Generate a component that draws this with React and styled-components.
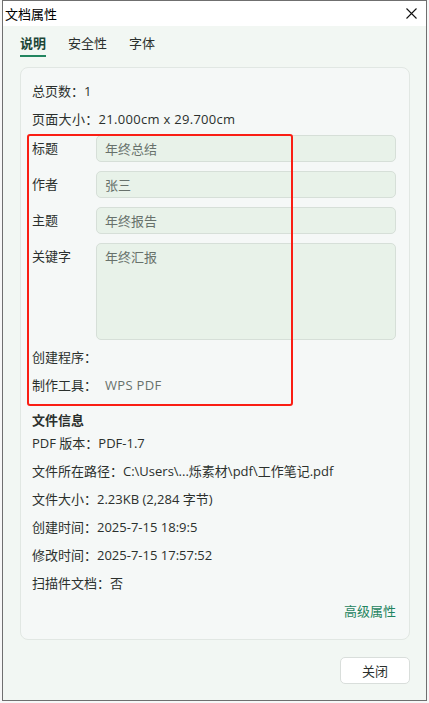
import React from "react";
import styled, {createGlobalStyle} from "styled-components";

const GlobalStyle = createGlobalStyle`
  html, body {
    margin: 0;
    padding: 0;
    background: #f7f7f7;
  }
  body {
    font-family: "Open Sans", "Noto Sans CJK SC", sans-serif;
    font-size: 13px;
    color: #2b302d;
  }
`;

const Win = styled.div`
  box-sizing: border-box;
  margin-left: 2px;
  width: 425px;
  height: 701px;
  border: 1px solid #6f6f6f;
  background: #f2f7f3;
  display: flex;
  flex-direction: column;
`;

const TitleBar = styled.div`
  height: 25px;
  background: #ffffff;
  display: flex;
  align-items: center;
  justify-content: space-between;
  padding: 0 9px 0 2px;
`;

const Title = styled.span`
  font-size: 13px;
  color: #000;
`;

const CloseX = styled.button`
  border: none;
  background: none;
  padding: 0;
  width: 12px;
  height: 12px;
  display: flex;
  align-items: center;
  justify-content: center;
`;

const Body = styled.div`
  flex: 1;
  display: flex;
  flex-direction: column;
  padding: 8px 16px 16px 17px;
`;

const Tabs = styled.div`
  display: flex;
  gap: 22px;
  height: 33px;
`;

const Tab = styled.div`
  height: 21px;
  line-height: 19px;
  font-size: 13px;
  font-weight: ${p => (p.$active ? 700 : 400)};
  color: ${p => (p.$active ? "#1c4637" : "#2b302d")};
  border-bottom: 2px solid ${p => (p.$active ? "#22855f" : "transparent")};
`;

const Panel = styled.div`
  box-sizing: border-box;
  height: 573px;
  background: #f5f8f7;
  border: 1px solid #e1e7e3;
  border-radius: 8px;
  padding: 9px 13px 13px 11px;
  display: flex;
  flex-direction: column;
`;

const Line = styled.div`
  height: 28px;
  line-height: 28px;
  white-space: nowrap;
  letter-spacing: ${p => (p.$wide ? "0.3px" : "0")};
`;

const Marked = styled.div`
  position: relative;
  margin-top: 2px;
  display: flex;
  flex-direction: column;
`;

const Fields = styled.div`
  display: flex;
  flex-direction: column;
  gap: 9px;
`;

const Field = styled.div`
  display: flex;
  align-items: flex-start;
`;

const Label = styled.div`
  width: 64px;
  flex-shrink: 0;
  line-height: 27px;
  height: 27px;
`;

const Input = styled.div`
  box-sizing: border-box;
  flex: 1;
  height: ${p => (p.$tall ? "97px" : "27px")};
  background: #e8f2e9;
  border: 1px solid #d6dfd8;
  border-radius: 5px;
  padding: 0 8px;
  line-height: 27px;
  color: #67716b;
`;

const Plain = styled.span`
  display: inline-block;
  width: 64px;
`;

const Gray = styled.span`
  color: #67716b;
  padding-left: 9px;
  letter-spacing: 0.3px;
`;

const Extra = styled.div`
  display: flex;
  flex-direction: column;
  margin-top: 3px;
`;

const RedMark = styled.div`
  position: absolute;
  left: -5px;
  top: -1px;
  width: 266px;
  height: 272px;
  box-sizing: border-box;
  border: 2.5px solid #fa1e14;
  border-radius: 3px;
  pointer-events: none;
`;

const Heading = styled.div`
  margin-top: 12px;
  height: 18px;
  line-height: 18px;
  font-weight: 700;
  font-size: 13px;
`;

const AdvLink = styled.div`
  height: 28px;
  line-height: 28px;
  text-align: right;
  color: #1f8460;
`;

const Footer = styled.div`
  display: flex;
  justify-content: flex-end;
  margin-top: 17px;
`;

const Btn = styled.button`
  box-sizing: border-box;
  width: 70px;
  height: 27px;
  background: #ffffff;
  border: 1px solid #d9dedb;
  border-radius: 5px;
  font-family: inherit;
  font-size: 13px;
  color: #2b302d;
`;

const fields = [
    {label: "标题", value: "年终总结"},
    {label: "作者", value: "张三"},
    {label: "主题", value: "年终报告"},
    {label: "关键字", value: "年终汇报", tall: true},
];

const fileInfo = [
    "PDF 版本：PDF-1.7",
    "文件所在路径：C:\\Users\\...烁素材\\pdf\\工作笔记.pdf",
    "文件大小：2.23KB (2,284 字节)",
    "创建时间：2025-7-15 18:9:5",
    "修改时间：2025-7-15 17:57:52",
    "扫描件文档：否",
];

const App = () => {
    return (
        <>
            <GlobalStyle/>
            <Win>
                <TitleBar>
                    <Title>文档属性</Title>
                    <CloseX aria-label="close">
                        <svg width="11" height="11" viewBox="0 0 11 11">
                            <path d="M0.5 0.5L10.5 10.5M10.5 0.5L0.5 10.5" stroke="#111" strokeWidth="1.1"/>
                        </svg>
                    </CloseX>
                </TitleBar>
                <Body>
                    <Tabs>
                        <Tab $active>说明</Tab>
                        <Tab>安全性</Tab>
                        <Tab>字体</Tab>
                    </Tabs>
                    <Panel>
                        <Line>总页数：1</Line>
                        <Line $wide>页面大小：21.000cm x 29.700cm</Line>
                        <Marked>
                            <Fields>
                                {fields.map(f => (
                                    <Field key={f.label}>
                                        <Label>{f.label}</Label>
                                        <Input $tall={f.tall}>{f.value}</Input>
                                    </Field>
                                ))}
                            </Fields>
                            <Extra>
                                <Line><Plain>创建程序：</Plain></Line>
                                <Line><Plain>制作工具：</Plain><Gray>WPS PDF</Gray></Line>
                            </Extra>
                            <RedMark/>
                        </Marked>
                        <Heading>文件信息</Heading>
                        {fileInfo.map(t => (
                            <Line key={t}>{t}</Line>
                        ))}
                        <AdvLink>高级属性</AdvLink>
                    </Panel>
                    <Footer>
                        <Btn>关闭</Btn>
                    </Footer>
                </Body>
            </Win>
        </>
    );
};

export default App;
